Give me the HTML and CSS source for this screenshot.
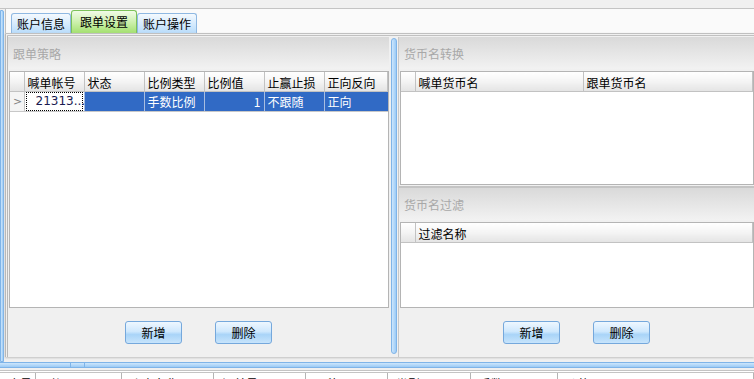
FILE: index.html
```html
<!doctype html>
<html lang="zh-CN">
  <head>
    <meta charset="UTF-8" />
    <title>跟单设置</title>
    <link rel="stylesheet" href="styles.css">
  </head>
  <body>
    <div class="top"></div>
    <div class="main">
      <div class="lbar"></div>
      <div class="work">
        <div class="tabbar">
          <div class="tab">账户信息</div>
          <div class="tab active">跟单设置</div>
          <div class="tab">账户操作</div>
        </div>
        <div class="page">
          <div class="panel left">
            <div class="group-head">跟单策略</div>
            <div class="grid grid-main">
              <table>
                <colgroup>
                  <col style="width:14px">
                  <col style="width:60px">
                  <col style="width:60px">
                  <col style="width:60px">
                  <col style="width:60px">
                  <col style="width:60px">
                  <col>
                </colgroup>
                <tr class="head">
                  <th></th>
                  <th>喊单帐号</th>
                  <th>状态</th>
                  <th>比例类型</th>
                  <th>比例值</th>
                  <th>止赢止损</th>
                  <th>正向反向</th>
                </tr>
                <tr class="sel">
                  <td class="rowhead">&gt;</td>
                  <td class="focus"><span>21313...</span></td>
                  <td></td>
                  <td>手数比例</td>
                  <td class="num">1</td>
                  <td>不跟随</td>
                  <td>正向</td>
                </tr>
              </table>
            </div>
            <div class="buttons">
              <button>新增</button>
              <button>删除</button>
            </div>
          </div>
          <div class="vsplit"></div>
          <div class="panel right">
            <div class="group-head">货币名转换</div>
            <div class="grid grid-conv">
              <table>
                <colgroup>
                  <col style="width:14px">
                  <col style="width:168px">
                  <col>
                </colgroup>
                <tr class="head">
                  <th></th>
                  <th>喊单货币名</th>
                  <th>跟单货币名</th>
                </tr>
              </table>
            </div>
            <div class="divider"></div>
            <div class="group-head">货币名过滤</div>
            <div class="grid grid-filter">
              <table>
                <colgroup>
                  <col style="width:14px">
                  <col>
                </colgroup>
                <tr class="head">
                  <th></th>
                  <th>过滤名称</th>
                </tr>
              </table>
            </div>
            <div class="buttons">
              <button>新增</button>
              <button>删除</button>
            </div>
          </div>
        </div>
      </div>
    </div>
    <div class="hsplit"><div class="grip"></div></div>
    <div class="bottom-grid">
      <div class="bcol" style="width:36px">序号</div>
      <div class="bcol" style="width:86px">时间</div>
      <div class="bcol" style="width:92px">账户名称</div>
      <div class="bcol" style="width:92px">订单号</div>
      <div class="bcol" style="width:82px">品种</div>
      <div class="bcol" style="width:83px">类型</div>
      <div class="bcol" style="width:87px">手数</div>
      <div class="bcol" style="width:196px">价格</div>
    </div>
  </body>
</html>
```

FILE: styles.css
```css
body {
  margin: 0;
  width: 754px;
  height: 379px;
  overflow: hidden;
  background: #f0f0f0;
  font-family: "Noto Sans CJK SC", "DejaVu Sans", sans-serif;
  font-size: 12px;
  color: #000;
}
.top {
  height: 8px;
  border-bottom: 1px solid #c4c4c4;
}
.main {
  display: flex;
  height: 353px;
}
.lbar {
  width: 2px;
  margin-top: 1px;
  border: 1px solid #7fb4e8;
  border-top-right-radius: 2px;
  background: linear-gradient(to right, #cde6fc, #9ccbf6);
}
.work {
  flex: 1;
  display: flex;
  flex-direction: column;
  padding-left: 1px;
}
.tabbar {
  height: 24px;
  display: flex;
  align-items: flex-end;
  padding-left: 5px;
  background: #fafafa;
  border-left: 1px solid #c0c0c0;
}
.tab {
  height: 19px;
  line-height: 19px;
  padding: 0 5px;
  border: 1px solid #8fb8e2;
  border-bottom: none;
  border-radius: 3px 3px 0 0;
  background: linear-gradient(to bottom, #f4f9fe, #d4eafd 55%, #b9dcfa);
}
.tab.active {
  height: 22px;
  line-height: 22px;
  padding: 0 8px;
  border-color: #7cc25a;
  background: linear-gradient(to bottom, #f1fbe8, #c9efa8 55%, #a4e070);
}
.page {
  height: 324px;
  display: flex;
  border-top: 3px double #c0c0c0;
  border-left: 3px double #b8b8b8;
  padding-top: 1px;
  box-sizing: border-box;
  box-shadow: 0 1px 2px #c0c0c0;
}
.panel {
  display: flex;
  flex-direction: column;
}
.panel.left {
  width: 381px;
}
.panel.right {
  flex: 1;
  border-left: 1px solid #c8c8c8;
}
.vsplit {
  width: 4px;
  margin: 1px 1px 3px 2px;
  border: 1px solid #7fb4e8;
  border-radius: 3px;
  background: linear-gradient(to right, #cde6fc, #9ccbf6);
}
.group-head {
  height: 32px;
  line-height: 34px;
  padding-left: 5px;
  color: #a8a8a8;
  background: linear-gradient(to bottom, #d9d9d9, #f2f2f2);
  margin-bottom: 2px;
}
.grid {
  background: #fff;
  border: 1px solid #b4b4b4;
  margin-left: 1px;
  overflow: hidden;
}
.grid-main {
  height: 235px;
}
.grid-conv {
  height: 112px;
}
.grid-filter {
  height: 84px;
}
.divider {
  height: 2px;
  background: #c4c4c4;
  margin-top: 1px;
}
.grid table {
  width: 100%;
  border-collapse: collapse;
  table-layout: fixed;
}
.grid th {
  height: 18px;
  padding: 1px 0 0 3px;
  text-align: left;
  font-weight: normal;
  white-space: nowrap;
  border: 1px solid #c2c2c2;
  border-top: none;
  border-radius: 2px;
  background: linear-gradient(to bottom, #ffffff, #f4f4f4 50%, #e4e4e4);
}
.grid th:first-child {
  border-left: none;
}
.grid tr.sel td {
  height: 19px;
  padding: 0 0 0 3px;
  white-space: nowrap;
  color: #fff;
  background: #316ac5;
  border-left: 1px solid #a8bde0;
  border-bottom: 1px solid #c8c8c8;
}
.grid tr.sel td.rowhead {
  background: #f4f4f4;
  color: #808080;
  border-left: none;
  border-right: 1px solid #c2c2c2;
  font-family: "DejaVu Sans", sans-serif;
  font-size: 11px;
}
.grid tr.sel td.focus {
  background: #fff;
  color: #1a1a50;
  padding: 0;
}
.focus span {
  display: block;
  margin: 0 1px;
  height: 17px;
  line-height: 17px;
  padding-left: 9px;
  border: 1px dotted #000;
  font-family: "DejaVu Sans", sans-serif;
}
.grid tr.sel td.num {
  text-align: right;
  padding-right: 3px;
}
.buttons {
  flex: 1;
  display: flex;
  justify-content: center;
  align-items: flex-start;
  gap: 33px;
  padding-top: 13px;
}
button {
  width: 57px;
  height: 23px;
  font-family: inherit;
  font-size: 12px;
  color: #000;
  border: 1px solid #75a8dc;
  border-radius: 3px;
  background: linear-gradient(to bottom, #eef7ff, #cfe8fd 45%, #a9d4f8 60%, #c7e4fc);
  padding: 0;
}
.hsplit {
  height: 4px;
  border-top: 1px solid #7fb4e8;
  border-bottom: 1px solid #7fb4e8;
  background: linear-gradient(to bottom, #cde6fc, #9ccbf6);
  position: relative;
}
.grip {
  position: absolute;
  left: 70px;
  top: -1px;
  width: 15px;
  height: 6px;
  border-left: 1px solid #7fb4e8;
  border-right: 1px solid #7fb4e8;
  box-sizing: border-box;
}
.bottom-grid {
  display: flex;
  margin-top: 2px;
  border-top: 3px double #c4c4c4;
  height: 12px;
  background: #fff;
  overflow: hidden;
}
.bcol {
  flex: none;
  box-sizing: border-box;
  border-right: 1px solid #b4b4b4;
  padding: 5px 0 0 8px;
  line-height: 12px;
  white-space: nowrap;
  overflow: hidden;
}
```
